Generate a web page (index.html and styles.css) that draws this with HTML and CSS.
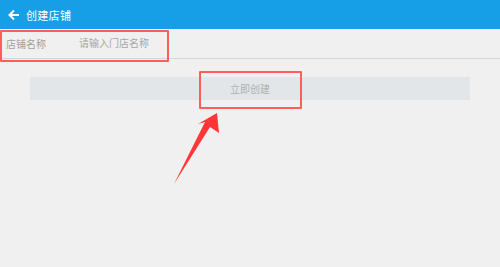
FILE: index.html
```html
<html>
<head>
    <meta charset="utf-8">
    <link rel="stylesheet" href="styles.css">
</head>
<body>
<div class="page">
    <div class="top-bar">
        <svg class="icon-back" width="12" height="12" viewBox="0 0 12 12">
            <path d="M11 6H2M6 1.5L1.5 6L6 10.5" stroke="#fff" stroke-width="2" fill="none"/>
        </svg>
        <span class="top-title">创建店铺</span>
    </div>
    <div class="form-row">
        <span class="form-label">店铺名称</span>
        <input class="form-input" type="text" placeholder="请输入门店名称">
    </div>
    <div class="btn-wrapper">
        <button class="btn-create">立即创建</button>
    </div>

    <!-- 标注 -->
    <div class="mark mark-input"></div>
    <div class="mark mark-btn"></div>
    <svg class="mark-arrow" width="500" height="267" viewBox="0 0 500 267">
        <polygon points="217,113 219,133 210,127 174,184 205,122 198,124" fill="#ff3636"/>
    </svg>
</div>
</body>
</html>
```

FILE: styles.css
```css
body{
    margin: 0;
    background: #f0f0f0;
    font-family: "Noto Sans CJK SC", "Noto Sans", sans-serif;
}
.page{
    position: relative;
    width: 500px;
    height: 267px;
    overflow: hidden;
}
.top-bar{
    height: 29px;
    background: #169fe6;
    display: flex;
    align-items: center;
    padding-left: 8px;
}
.icon-back{
    display: block;
}
.top-title{
    margin-left: 6px;
    color: #fff;
    font-size: 11px;
    letter-spacing: 0.3px;
}
.form-row{
    height: 29px;
    display: flex;
    align-items: center;
    border-bottom: 1px solid #d6d6d6;
    padding-left: 6px;
}
.form-label{
    width: 73px;
    font-size: 10px;
    color: #a0a0a0;
}
.form-input{
    border: none;
    background: transparent;
    outline: none;
    padding: 0;
    font-size: 10px;
    font-family: inherit;
    margin-top: -2px;
}
.form-input::placeholder{
    color: #a6a6a6;
}
.btn-wrapper{
    padding: 18px 30px 0;
}
.btn-create{
    display: block;
    width: 100%;
    height: 23px;
    border: none;
    border-radius: 1px;
    background: #e2e6e9;
    color: #adafb1;
    font-size: 10px;
    font-family: inherit;
    padding: 0;
}

/* 红色标注框 */
.mark{
    position: absolute;
    border: 2px solid #ff5c5c;
    border-radius: 1px;
}
.mark-input{
    left: 0;
    top: 30px;
    width: 165px;
    height: 28px;
}
.mark-btn{
    left: 199px;
    top: 71px;
    width: 99px;
    height: 34px;
}
.mark-arrow{
    position: absolute;
    left: 0;
    top: 0;
}
```
